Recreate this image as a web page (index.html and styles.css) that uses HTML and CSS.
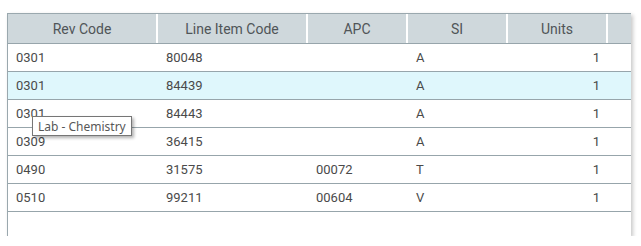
FILE: index.html
```html
<!DOCTYPE html>
<html>
<head>
<meta charset="utf-8">
<link rel="stylesheet" href="styles.css">
</head>
<body>
<div class="grid">
  <div class="row head">
    <div class="c c1">Rev Code</div>
    <div class="c c2">Line Item Code</div>
    <div class="c c3">APC</div>
    <div class="c c4">SI</div>
    <div class="c c5">Units</div>
    <div class="c c6"></div>
  </div>
  <div class="row">
    <div class="c c1">0301</div><div class="c c2">80048</div><div class="c c3"></div><div class="c c4">A</div><div class="c c5 num">1</div><div class="c c6"></div>
  </div>
  <div class="row hl">
    <div class="c c1">0301</div><div class="c c2">84439</div><div class="c c3"></div><div class="c c4">A</div><div class="c c5 num">1</div><div class="c c6"></div>
  </div>
  <div class="row">
    <div class="c c1 tipcell">0301<span class="tip">Lab - Chemistry</span></div><div class="c c2">84443</div><div class="c c3"></div><div class="c c4">A</div><div class="c c5 num">1</div><div class="c c6"></div>
  </div>
  <div class="row">
    <div class="c c1">0309</div><div class="c c2">36415</div><div class="c c3"></div><div class="c c4">A</div><div class="c c5 num">1</div><div class="c c6"></div>
  </div>
  <div class="row">
    <div class="c c1">0490</div><div class="c c2">31575</div><div class="c c3">00072</div><div class="c c4">T</div><div class="c c5 num">1</div><div class="c c6"></div>
  </div>
  <div class="row">
    <div class="c c1">0510</div><div class="c c2">99211</div><div class="c c3">00604</div><div class="c c4">V</div><div class="c c5 num">1</div><div class="c c6"></div>
  </div>
  <div class="filler"></div>
</div>
</body>
</html>
```
FILE: styles.css
```css
html, body { margin: 0; padding: 0; background: #fff; }
body { padding: 13px 0 0 7px; font-family: Roboto, "Liberation Sans", sans-serif; }
.grid {
  width: 624px;
  height: 223px;
  box-sizing: border-box;
  border-top: 1px solid #9aa8ae;
  border-left: 1px solid #9aa8ae;
  background: #fff;
  box-shadow: 2px 2px 4px rgba(0,0,0,0.22);
  display: flex;
  flex-direction: column;
}
.row {
  display: flex;
  height: 28px;
  box-sizing: border-box;
  border-bottom: 1px solid #97a5ab;
  color: #4a4a4a;
  font-size: 13px;
}
.row.hl { background: #dff7fc; }
.head {
  height: 30px;
  background: #cfd8dc;
  border-bottom: 1px solid #97a5ab;
  font-size: 14px;
  color: #505558;
}
.c { display: flex; align-items: center; box-sizing: border-box; padding: 0 8px; }
.head .c { justify-content: center; border-right: 2px solid #fff; }
.head .c6 { border-right: none; }
.c1 { width: 150px; }
.c2 { width: 150px; }
.c3 { width: 100px; }
.c4 { width: 100px; }
.c5 { width: 100px; }
.c6 { flex: 1; }
.num { justify-content: flex-end; }
.tipcell { position: relative; }
.tip {
  position: absolute;
  left: 24px;
  top: 16px;
  height: 20px;
  box-sizing: border-box;
  padding: 0 5px;
  display: flex;
  align-items: center;
  background: #fff;
  border: 1px solid #767676;
  font-family: "Noto Sans", "Open Sans", sans-serif;
  font-size: 12px;
  color: #575757;
  white-space: nowrap;
  box-shadow: 2px 2px 3px rgba(0,0,0,0.3);
  z-index: 2;
}
.filler { flex: 1; }
```
